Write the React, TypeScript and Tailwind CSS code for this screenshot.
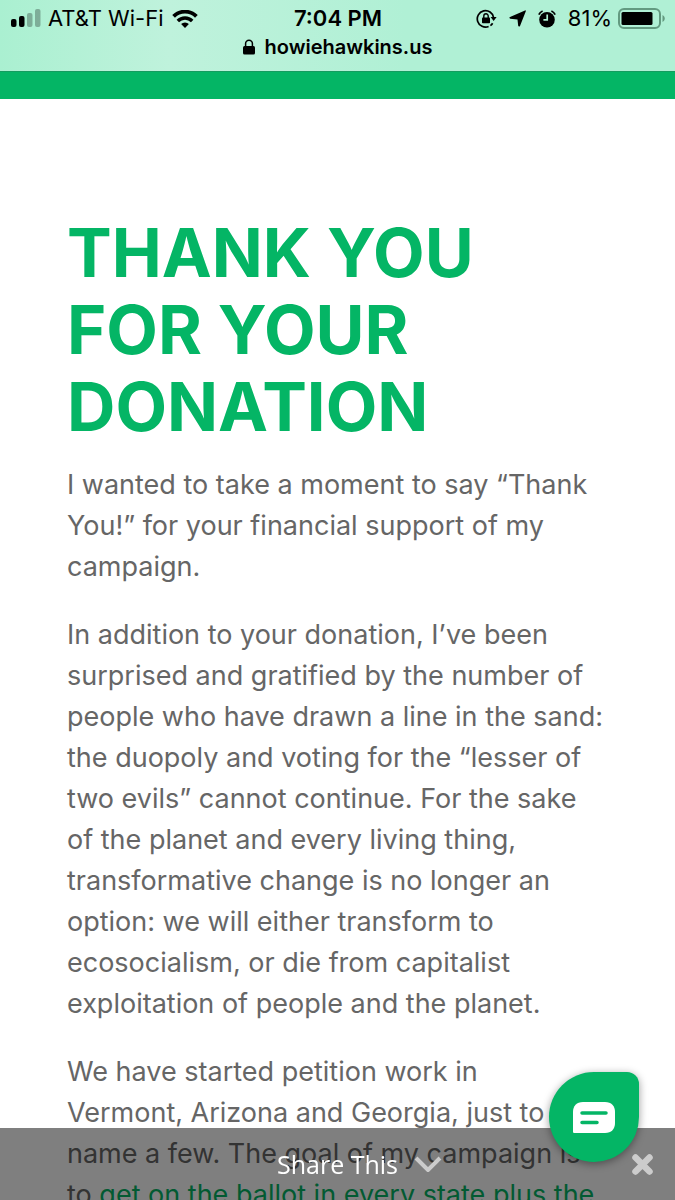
import { useState } from "react";

function SignalIcon() {
  return (
    <svg className="h-[19px] w-[31px] shrink-0" viewBox="0 0 31 19" aria-hidden="true">
      <rect x="0" y="10" width="5.500" height="8" rx="2" />
      <rect x="8" y="7" width="5.500" height="11" rx="2" />
      <rect x="16" y="4" width="5.500" height="14" rx="2" opacity="0.28" />
      <rect x="24" y="0" width="5.500" height="18" rx="2" opacity="0.28" />
    </svg>
  );
}

function WifiIcon() {
  return (
    <svg className="h-[18px] w-[26px] shrink-0" viewBox="0 0 26 18" aria-hidden="true">
      <path d="M1.600 6.400a16 16 0 0 1 22.800 0" fill="none" stroke="currentColor" strokeWidth="3.800" />
      <path d="M5.800 11a10 10 0 0 1 14.400 0" fill="none" stroke="currentColor" strokeWidth="3.400" />
      <path d="M13 18l-3.900-3.900a5.600 5.600 0 0 1 7.800 0z" />
    </svg>
  );
}

function RotationLockIcon() {
  return (
    <svg className="h-5 w-[21px] shrink-0" viewBox="0 0 21 20" aria-hidden="true">
      <path d="M17.600 8.600A8.200 8.200 0 1 0 12.600 17.500" fill="none" stroke="currentColor" strokeWidth="1.700" />
      <path d="M14.400 16.600a8.200 8.200 0 0 0 2.200-2.400" fill="none" stroke="currentColor" strokeWidth="1.700" />
      <path d="M14.600 8h6l-3 4z" />
      <rect x="6" y="8.600" width="8" height="5.600" rx="0.800" />
      <path d="M7.800 9V7a2.200 2.200 0 0 1 4.400 0v2" fill="none" stroke="currentColor" strokeWidth="1.400" />
    </svg>
  );
}

function LocationIcon() {
  return (
    <svg className="h-[17px] w-[17px] shrink-0" viewBox="0 0 17 17" aria-hidden="true">
      <path d="M16 .4a.7.7 0 0 1 .8.9L11 16c-.4.900-1.700.8-1.800-.2L8.500 9.400 1.300 8.700C.3 8.600.1 7.300 1 6.900z" />
    </svg>
  );
}

function AlarmIcon() {
  return (
    <svg className="h-[18px] w-[18px] shrink-0" viewBox="0 0 18 18" aria-hidden="true">
      <circle cx="9" cy="9.800" r="7.800" />
      <path d="M.8 4.600A8 8 0 0 1 4.600.9M17.200 4.600A8 8 0 0 0 13.400.9" fill="none" stroke="currentColor" strokeWidth="1.700" />
      <path d="M9.200 4.600v5.200H5.400" fill="none" stroke="#aef0d2" strokeWidth="1.700" />
    </svg>
  );
}

function BatteryIcon() {
  return (
    <svg className="h-[21px] w-[47px] shrink-0" viewBox="0 0 47 21" aria-hidden="true">
      <rect x="1" y="1" width="41" height="19" rx="5" fill="none" stroke="#639a80" strokeWidth="2" />
      <rect x="3.500" y="4" width="31" height="13" rx="1.500" />
      <path d="M44.500 7v7c3-1.500 3-5.500 0-7z" fill="#639a80" />
    </svg>
  );
}

function LockIcon() {
  return (
    <svg className="h-4 w-3 shrink-0" viewBox="0 0 12 16" aria-hidden="true">
      <rect x="0" y="7" width="12" height="8.500" rx="1.500" />
      <path d="M2.600 8V4.600a3.400 3.400 0 0 1 6.800 0V8" fill="none" stroke="currentColor" strokeWidth="1.500" />
    </svg>
  );
}

function ChatIcon() {
  return (
    <svg className="h-[31px] w-[42px]" viewBox="0 0 42 31" aria-hidden="true">
      <path d="M10 0h22c6.500 0 10 4 10 10v11c0 6-3.500 10-10 10H1.500C.5 31 0 30.500 0 29.500V10C0 4 3.500 0 10 0z" fill="#fff" />
      <path d="M9 11h24M9 20.500h15" stroke="#04b565" strokeWidth="3.500" strokeLinecap="round" />
    </svg>
  );
}

function StatusBar() {
  return (
    <header className="h-[72px] shrink-0 border-b border-[#149c5f] bg-linear-to-r from-[#aaf0d1] via-[#bff2dc] via-25% to-[#b0f0d5] to-60% text-black">
      <div className="grid grid-cols-[1fr_auto_1fr] items-center pt-1 pr-2.5 pl-[11px] text-[22px] leading-[29px]">
        <div className="flex items-center gap-[6px]">
          <SignalIcon />
          <span>AT&amp;T Wi-Fi</span>
          <span className="ml-0.5">
            <WifiIcon />
          </span>
        </div>
        <span className="font-semibold">7:04 PM</span>
        <div className="flex items-center justify-end gap-3">
          <RotationLockIcon />
          <LocationIcon />
          <AlarmIcon />
          <span className="flex items-center gap-[6px]">
            81%
            <BatteryIcon />
          </span>
        </div>
      </div>
      <div className="flex items-center justify-center gap-2.5 text-[20px] leading-7 font-semibold">
        <LockIcon />
        <span>howiehawkins.us</span>
      </div>
    </header>
  );
}

function ShareBar({ onClose }: { onClose: () => void }) {
  return (
    <div className="fixed inset-x-0 bottom-0 flex h-[72px] items-center justify-center bg-black/50 pl-11">
      <button
        type="button"
        className="flex items-center gap-4 font-['Open_Sans',sans-serif] text-[25px] leading-8 text-white"
      >
        Share This
        <svg className="h-4 w-7" viewBox="0 0 28 16" aria-hidden="true">
          <path d="M2 2l12 12L26 2" fill="none" stroke="#ccc" strokeWidth="4" />
        </svg>
      </button>
      <button type="button" aria-label="Close" onClick={onClose} className="absolute right-[21px]">
        <svg className="h-[23px] w-[23px]" viewBox="0 0 23 23" aria-hidden="true">
          <path d="M4.500 4.500l14 14M18.500 4.500l-14 14" stroke="#ccc" strokeWidth="6.500" strokeLinecap="round" />
        </svg>
      </button>
    </div>
  );
}

export default function App() {
  const [showShare, setShowShare] = useState(true);

  return (
    <div className="flex h-screen flex-col overflow-hidden bg-white font-['Inter',sans-serif]">
      <StatusBar />
      <div className="h-[27px] shrink-0 bg-[#04b565]" />

      <main className="min-h-0 flex-1 overflow-hidden px-[67px] pt-[115px] text-[#666]">
        <h1 className="text-[67px] leading-[77px] font-bold text-[#04b565]">
          THANK YOU
          <br />
          FOR YOUR
          <br />
          DONATION
        </h1>

        <div className="mt-[19px] space-y-[27px] text-[27px] leading-[41px]">
          <p>
            I wanted to take a moment to say “Thank
            <br />
            You!” for your financial support of my
            <br />
            campaign.
          </p>
          <p>
            In addition to your donation, I’ve been
            <br />
            surprised and gratified by the number of
            <br />
            people who have drawn a line in the sand:
            <br />
            the duopoly and voting for the “lesser of
            <br />
            two evils” cannot continue. For the sake
            <br />
            of the planet and every living thing,
            <br />
            transformative change is no longer an
            <br />
            option: we will either transform to
            <br />
            ecosocialism, or die from capitalist
            <br />
            exploitation of people and the planet.
          </p>
          <p>
            We have started petition work in
            <br />
            Vermont, Arizona and Georgia, just to
            <br />
            name a few. The goal of my campaign is
            <br />
            to{" "}
            <a href="#ballot" className="text-[#04b565]">
              get on the ballot in every state plus the
            </a>
          </p>
        </div>
      </main>

      {showShare ? <ShareBar onClose={() => setShowShare(false)} /> : null}

      <button
        type="button"
        aria-label="Open chat"
        className="fixed right-9 bottom-[38px] flex size-[90px] items-center justify-center rounded-[45px] rounded-tr-xl bg-[#04b565] shadow-[0_2px_8px_rgba(0,0,0,0.4)]"
      >
        <ChatIcon />
      </button>
    </div>
  );
}
